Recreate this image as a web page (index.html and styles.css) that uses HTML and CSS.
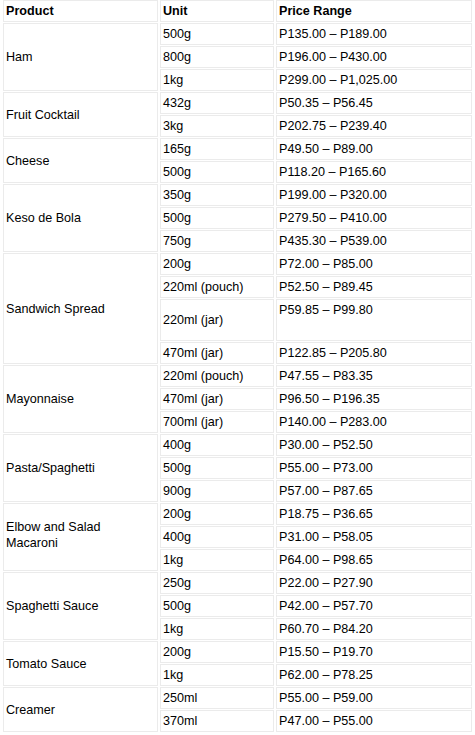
FILE: index.html
```html
<!DOCTYPE html>
<html>
<head>
<meta charset="utf-8">
<link rel="stylesheet" href="styles.css">
</head>
<body>
<table class="prices">
  <colgroup>
    <col class="c-product">
    <col class="c-unit">
    <col class="c-price">
  </colgroup>
  <thead>
    <tr><th>Product</th><th>Unit</th><th>Price Range</th></tr>
  </thead>
  <tbody>
    <tr><td rowspan="3">Ham</td><td>500g</td><td>P135.00 – P189.00</td></tr>
    <tr><td>800g</td><td>P196.00 – P430.00</td></tr>
    <tr><td>1kg</td><td>P299.00 – P1,025.00</td></tr>
    <tr><td rowspan="2">Fruit Cocktail</td><td>432g</td><td>P50.35 – P56.45</td></tr>
    <tr><td>3kg</td><td>P202.75 – P239.40</td></tr>
    <tr><td rowspan="2">Cheese</td><td>165g</td><td>P49.50 – P89.00</td></tr>
    <tr><td>500g</td><td>P118.20 – P165.60</td></tr>
    <tr><td rowspan="3">Keso de Bola</td><td>350g</td><td>P199.00 – P320.00</td></tr>
    <tr><td>500g</td><td>P279.50 – P410.00</td></tr>
    <tr><td>750g</td><td>P435.30 – P539.00</td></tr>
    <tr><td rowspan="4">Sandwich Spread</td><td>200g</td><td>P72.00 – P85.00</td></tr>
    <tr><td>220ml (pouch)</td><td>P52.50 – P89.45</td></tr>
    <tr><td>220ml (jar)</td><td class="tall">P59.85 – P99.80</td></tr>
    <tr><td>470ml (jar)</td><td>P122.85 – P205.80</td></tr>
    <tr><td rowspan="3">Mayonnaise</td><td>220ml (pouch)</td><td>P47.55 – P83.35</td></tr>
    <tr><td>470ml (jar)</td><td>P96.50 – P196.35</td></tr>
    <tr><td>700ml (jar)</td><td>P140.00 – P283.00</td></tr>
    <tr><td rowspan="3">Pasta/Spaghetti</td><td>400g</td><td>P30.00 – P52.50</td></tr>
    <tr><td>500g</td><td>P55.00 – P73.00</td></tr>
    <tr><td>900g</td><td>P57.00 – P87.65</td></tr>
    <tr><td rowspan="3" class="lift">Elbow and Salad Macaroni</td><td>200g</td><td>P18.75 – P36.65</td></tr>
    <tr><td>400g</td><td>P31.00 – P58.05</td></tr>
    <tr><td>1kg</td><td>P64.00 – P98.65</td></tr>
    <tr><td rowspan="3">Spaghetti Sauce</td><td>250g</td><td>P22.00 – P27.90</td></tr>
    <tr><td>500g</td><td>P42.00 – P57.70</td></tr>
    <tr><td>1kg</td><td>P60.70 – P84.20</td></tr>
    <tr><td rowspan="2">Tomato Sauce</td><td>200g</td><td>P15.50 – P19.70</td></tr>
    <tr><td>1kg</td><td>P62.00 – P78.25</td></tr>
    <tr><td rowspan="2">Creamer</td><td>250ml</td><td>P55.00 – P59.00</td></tr>
    <tr><td>370ml</td><td>P47.00 – P55.00</td></tr>
  </tbody>
</table>
</body>
</html>
```

FILE: styles.css
```css
html, body {
  margin: 0;
  padding: 0;
  background: #ffffff;
}

.prices {
  margin: -1px 0 0 1px;
  border-collapse: separate;
  border-spacing: 2px 1px;
  table-layout: fixed;
  width: 473px;
  font-family: "Liberation Sans", Arial, sans-serif;
  font-size: 12.6px;
  line-height: 16px;
  color: #000000;
}

.c-product { width: 155px; }
.c-unit { width: 114px; }
.c-price { width: 196px; }

.prices th,
.prices td {
  border: 1px solid #ebebeb;
  padding: 2px;
  text-align: left;
  vertical-align: middle;
  height: 16px;
}

.prices th {
  font-weight: bold;
}

.prices td.tall {
  vertical-align: top;
  height: 36px;
}

.prices td.lift {
  padding-bottom: 6px;
}
```
